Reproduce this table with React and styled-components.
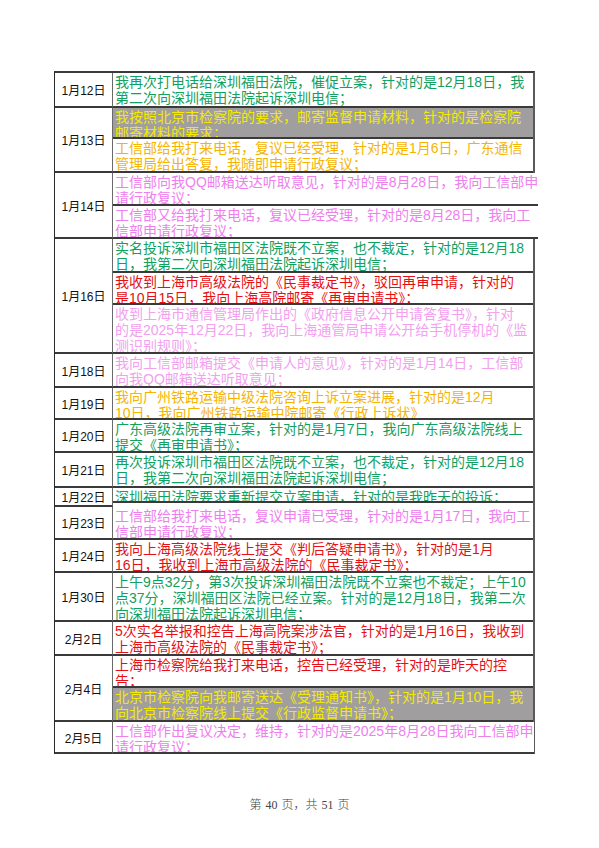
import React from 'react'
import styled, { createGlobalStyle } from 'styled-components'

const GlobalStyle = createGlobalStyle`
  html, body {
    margin: 0;
    padding: 0;
    background: #ffffff;
  }
  body {
    font-family: "Liberation Sans", "Noto Sans CJK SC", sans-serif;
  }
`

const COLORS = {
  green: '#12a060',
  gold: '#f5b400',
  pink: '#ee80ee',
  lightPink: '#f3a0ef',
  red: '#e60f14',
  yellow: '#f3ea00',
}

const rows = [
  { date: '1月12日', entries: [
    { h: 35, c: 'green', lines: ['我再次打电话给深圳福田法院，催促立案，针对的是12月18日，我', '第二次向深圳福田法院起诉深圳电信；'] },
  ] },
  { date: '1月13日', entries: [
    { h: 31, c: 'yellow', shade: true, lines: ['我按照北京市检察院的要求，邮寄监督申请材料，针对的是检察院', '邮寄材料的要求；'] },
    { h: 34, c: 'gold', lines: ['工信部给我打来电话，复议已经受理，针对的是1月6日，广东通信', '管理局给出答复，我随即申请行政复议；'] },
  ] },
  { date: '1月14日', entries: [
    { h: 33, c: 'pink', lines: ['工信部向我QQ邮箱送达听取意见，针对的是8月28日，我向工信部申', '请行政复议；'] },
    { h: 33, c: 'pink', lines: ['工信部又给我打来电话，复议已经受理，针对的是8月28日，我向工', '信部申请行政复议；'] },
  ] },
  { date: '1月16日', entries: [
    { h: 34, c: 'green', lines: ['实名投诉深圳市福田区法院既不立案，也不裁定，针对的是12月18', '日，我第二次向深圳福田法院起诉深圳电信；'] },
    { h: 32, c: 'red', lines: ['我收到上海市高级法院的《民事裁定书》，驳回再审申请，针对的', '是10月15日，我向上海高院邮寄《再审申请书》；'] },
    { h: 49, c: 'lightPink', lines: ['收到上海市通信管理局作出的《政府信息公开申请答复书》，针对', '的是2025年12月22日，我向上海通管局申请公开给手机停机的《监', '测识别规则》；'] },
  ] },
  { date: '1月18日', entries: [
    { h: 34, c: 'lightPink', lines: ['我向工信部邮箱提交《申请人的意见》，针对的是1月14日，工信部', '向我QQ邮箱送达听取意见；'] },
  ] },
  { date: '1月19日', entries: [
    { h: 32, c: 'gold', lines: ['我向广州铁路运输中级法院咨询上诉立案进展，针对的是12月', '10日，我向广州铁路运输中院邮寄《行政上诉状》'] },
  ] },
  { date: '1月20日', entries: [
    { h: 33, c: 'green', lines: ['广东高级法院再审立案，针对的是1月7日，我向广东高级法院线上', '提交《再审申请书》；'] },
  ] },
  { date: '1月21日', entries: [
    { h: 35, c: 'green', lines: ['再次投诉深圳市福田区法院既不立案，也不裁定，针对的是12月18', '日，我第二次向深圳福田法院起诉深圳电信；'] },
  ] },
  { date: '1月22日', entries: [
    { h: 15, c: 'green', lines: ['深圳福田法院要求重新提交立案申请，针对的是我昨天的投诉；'] },
  ] },
  { date: '1月23日', entries: [
    { h: 33, c: 'pink', lines: ['工信部给我打来电话，复议申请已受理，针对的是1月17日，我向工', '信部申请行政复议；'] },
  ] },
  { date: '1月24日', entries: [
    { h: 33, c: 'red', lines: ['我向上海高级法院线上提交《判后答疑申请书》，针对的是1月', '16日，我收到上海市高级法院的《民事裁定书》；'] },
  ] },
  { date: '1月30日', entries: [
    { h: 49, c: 'green', lines: ['上午9点32分，第3次投诉深圳福田法院既不立案也不裁定；上午10', '点37分，深圳福田区法院已经立案。针对的是12月18日，我第二次', '向深圳福田法院起诉深圳电信；'] },
  ] },
  { date: '2月2日', entries: [
    { h: 34, c: 'red', lines: ['5次实名举报和控告上海高院案涉法官，针对的是1月16日，我收到', '上海市高级法院的《民事裁定书》；'] },
  ] },
  { date: '2月4日', entries: [
    { h: 32, c: 'red', lines: ['上海市检察院给我打来电话，控告已经受理，针对的是昨天的控', '告；'] },
    { h: 34, c: 'yellow', shade: true, lines: ['北京市检察院向我邮寄送达《受理通知书》，针对的是1月10日，我', '向北京市检察院线上提交《行政监督申请书》；'] },
  ] },
  { date: '2月5日', entries: [
    { h: 32, c: 'pink', lines: ['工信部作出复议决定，维持，针对的是2025年8月28日我向工信部申', '请行政复议；'] },
  ] },
]

function App() {
  return (
    <Page>
      <GlobalStyle />
      <Table>
        {rows.map((row) => (
          <Row key={row.date}>
            <DateCell>{row.date}</DateCell>
            <Entries>
              {row.entries.map((e, i) => (
                <Entry key={i} $h={e.h} $color={COLORS[e.c]} $shade={e.shade}>
                  {e.lines.map((l, j) => (
                    <Line key={j}>{l}</Line>
                  ))}
                </Entry>
              ))}
            </Entries>
          </Row>
        ))}
      </Table>
      <Footer>第 40 页，共 51 页</Footer>
    </Page>
  )
}

export default App

// PAGE
const Page = styled.div`
  width: 599px;
  min-height: 848px;
  padding-top: 71px;
  box-sizing: border-box;
  display: flex;
  flex-direction: column;
  align-items: center;
`

// TABLE
const Table = styled.div`
  width: 478px;
  align-self: flex-start;
  margin-left: 54px;
  display: flex;
  flex-direction: column;
  border-top: 2px solid #3a3a3a;
  border-left: 1px solid #2a2a2a;
  border-right: 2px solid #5a5a5a;
`

const Row = styled.div`
  display: grid;
  grid-template-columns: 58px 1fr;
`

const DateCell = styled.div`
  display: flex;
  align-items: center;
  justify-content: center;
  font-size: 12px;
  color: #111;
  border-right: 1px solid #6a6a6a;
  border-bottom: 2px solid #3a3a3a;
`

const Entries = styled.div`
  display: flex;
  flex-direction: column;
`

const Entry = styled.div`
  box-sizing: border-box;
  height: ${(p) => p.$h}px;
  overflow: hidden;
  padding: 1px 0 0 2px;
  font-size: 14px;
  line-height: 16px;
  color: ${(p) => p.$color};
  background: ${(p) => (p.$shade ? '#a09e9f' : '#ffffff')};
  border-bottom: 2px solid #3a3a3a;
`

const Line = styled.div`
  white-space: nowrap;
`

// FOOTER
const Footer = styled.div`
  margin-top: 43px;
  font-family: "Liberation Serif", "Noto Sans CJK SC", serif;
  font-size: 12px;
  font-weight: 300;
  line-height: 16px;
  color: #444;
  word-spacing: 1px;
`
